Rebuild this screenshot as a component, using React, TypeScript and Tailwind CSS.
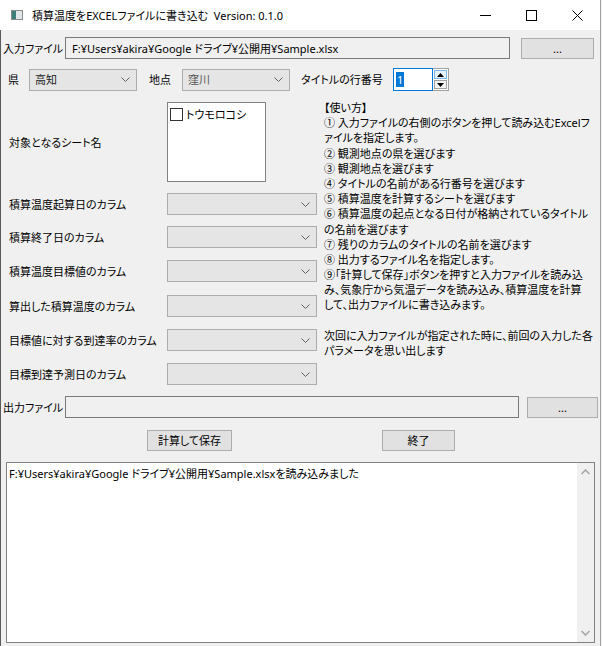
import React from 'react';

const Chevron = () => (
  <svg width="9" height="5" viewBox="0 0 9 5" className="shrink-0">
    <polyline points="0.5,0.5 4.5,4.5 8.5,0.5" fill="none" stroke="#606060" strokeWidth="1" />
  </svg>
);

function Combo({ text, w, dim }: { text?: string; w: string; dim?: boolean }) {
  return (
    <div className={`flex h-[22px] shrink-0 items-center justify-between border border-[#adadad] bg-[#e5e5e5] pl-[5px] pr-[6px] ${w}`}>
      <span className={dim ? 'text-[#555555]' : 'text-[#1a1a1a]'}>{text ?? ''}</span>
      <Chevron />
    </div>
  );
}

function Btn({ children, w, h }: { children: React.ReactNode; w: string; h: string }) {
  return (
    <div className={`flex shrink-0 items-center justify-center border border-[#adadad] bg-[#e1e1e1] ${w} ${h}`}>{children}</div>
  );
}

const helpLines = [
  '【使い方】',
  '① 入力ファイルの右側のボタンを押して読み込むExcelフ',
  'ァイルを指定します。',
  '② 観測地点の県を選びます',
  '③ 観測地点を選びます',
  '④ タイトルの名前がある行番号を選びます',
  '⑤ 積算温度を計算するシートを選びます',
  '⑥ 積算温度の起点となる日付が格納されているタイトル',
  'の名前を選びます',
  '⑦ 残りのカラムのタイトルの名前を選びます',
  '⑧ 出力するファイル名を指定します。',
  '⑨「計算して保存」ボタンを押すと入力ファイルを読み込',
  'み、気象庁から気温データを読み込み、積算温度を計算',
  'して、出力ファイルに書き込みます。',
  '\u00a0',
  '次回に入力ファイルが指定された時に、前回の入力した各',
  'パラメータを思い出します',
];

function ComboRow({ label, mt }: { label: string; mt: string }) {
  return (
    <div className={`flex h-[22px] items-center ${mt}`}>
      <span className="w-[166px] shrink-0 whitespace-nowrap pl-[8px]">{label}</span>
      <Combo w="w-[150px]" />
    </div>
  );
}

export default function App() {
  return (
    <div className="flex h-[646px] w-[602px] overflow-hidden bg-[#f0f0f0] text-[11px] leading-[15px] text-black [font-family:'Noto_Sans','Noto_Sans_CJK_JP',sans-serif] [font-feature-settings:'palt']">
      <div className="flex w-[601px] shrink-0 flex-col border-r border-[#a0a0a0]">
        {/* title bar */}
        <div className="flex h-[30px] shrink-0 items-center bg-white">
          <div className="ml-[11px] flex h-[10px] w-[12px] border border-[#8a8a8a]">
            <div className="w-[4px] bg-[#3d7f7a]" />
            <div className="flex-1 bg-[#dfe6ea]" />
          </div>
          <span className="ml-[9px] whitespace-nowrap text-[11px]">
            積算温度をEXCELファイルに書き込む&nbsp;&nbsp;Version: 0.1.0
          </span>
          <div className="ml-auto flex h-full">
            <div className="flex w-[46px] items-center justify-center">
              <svg width="11" height="11" viewBox="0 0 11 11"><line x1="0" y1="5.5" x2="11" y2="5.5" stroke="#000" strokeWidth="1" /></svg>
            </div>
            <div className="flex w-[46px] items-center justify-center">
              <svg width="11" height="11" viewBox="0 0 11 11"><rect x="0.5" y="0.5" width="10" height="10" fill="none" stroke="#000" strokeWidth="1" /></svg>
            </div>
            <div className="flex w-[46px] items-center justify-center">
              <svg width="11" height="11" viewBox="0 0 11 11"><path d="M0.5 0.5 L10.5 10.5 M10.5 0.5 L0.5 10.5" stroke="#000" strokeWidth="1" /></svg>
            </div>
          </div>
        </div>

        {/* body */}
        <div className="flex flex-1 flex-col border-l border-[#5a5a5a]">
          {/* input file row */}
          <div className="mt-[7px] flex h-[22px] items-center">
            <span className="w-[64px] shrink-0 whitespace-nowrap pl-[2px]">入力ファイル</span>
            <div className="flex h-[22px] w-[445px] shrink-0 items-center border border-[#7a7a7a] bg-[#f0f0f0] pl-[6px] whitespace-nowrap">
              F:¥Users¥akira¥Google ドライブ¥公開用¥Sample.xlsx
            </div>
            <div className="ml-[11px]">
              <Btn w="w-[73px]" h="h-[21px]">...</Btn>
            </div>
          </div>

          {/* prefecture row */}
          <div className="mt-[9px] flex h-[23px] items-center">
            <span className="w-[28px] shrink-0 pl-[7px]">県</span>
            <Combo text="高知" w="w-[108px]" />
            <span className="ml-[12px] w-[33px] shrink-0">地点</span>
            <Combo text="窪川" w="w-[108px]" dim />
            <span className="ml-[11px] w-[92px] shrink-0 whitespace-nowrap">タイトルの行番号</span>
            <div className="flex h-[23px] w-[56px] shrink-0">
              <div className="flex w-[40px] items-center border border-[#0078d7] bg-white pl-[2px]">
                <span className="flex h-[15px] items-center bg-[#0078d7] px-[1px] text-white">1</span>
              </div>
              <div className="flex w-[16px] flex-col border-y border-r border-[#a0a0a0] bg-white p-[1px]">
                <div className="flex h-[10px] items-center justify-center border border-[#7eb4ea] bg-[#e5f1fb]">
                  <svg width="7" height="4" viewBox="0 0 7 4"><polygon points="0,4 3.5,0 7,4" fill="#000" /></svg>
                </div>
                <div className="mt-[1px] flex h-[9px] items-center justify-center border border-[#a0a0a0] bg-[#f3f3f3]">
                  <svg width="7" height="4" viewBox="0 0 7 4"><polygon points="0,0 3.5,4 7,0" fill="#000" /></svg>
                </div>
              </div>
            </div>
          </div>

          {/* middle section */}
          <div className="mt-[11px] flex">
            <div className="flex w-[316px] shrink-0 flex-col">
              <div className="flex h-[80px] items-center">
                <span className="w-[166px] shrink-0 whitespace-nowrap pl-[8px]">対象となるシート名</span>
                <div className="h-[80px] w-[99px] shrink-0 border border-[#828282] bg-white pl-[2px] pt-[4px]">
                  <div className="flex items-center">
                    <div className="h-[13px] w-[13px] border border-[#333333] bg-white" />
                    <span className="ml-[3px]">トウモロコシ</span>
                  </div>
                </div>
              </div>
              <ComboRow label="積算温度起算日のカラム" mt="mt-[11px]" />
              <ComboRow label="積算終了日のカラム" mt="mt-[11px]" />
              <ComboRow label="積算温度目標値のカラム" mt="mt-[12px]" />
              <ComboRow label="算出した積算温度のカラム" mt="mt-[13px]" />
              <ComboRow label="目標値に対する到達率のカラム" mt="mt-[12px]" />
              <ComboRow label="目標到達予測日のカラム" mt="mt-[12px]" />
            </div>
            <div className="ml-[7px] -mt-[2px] flex flex-col">
              {helpLines.map((l, i) => (
                <div key={i} className="h-[15.2px] whitespace-nowrap">{l}</div>
              ))}
            </div>
          </div>

          {/* output file row */}
          <div className="mt-[11px] flex h-[22px] items-center">
            <span className="w-[64px] shrink-0 whitespace-nowrap pl-[2px]">出力ファイル</span>
            <div className="h-[22px] w-[454px] shrink-0 border border-[#7a7a7a] bg-[#f0f0f0]" />
            <div className="ml-[8px]">
              <Btn w="w-[71px]" h="h-[21px]">...</Btn>
            </div>
          </div>

          {/* action buttons */}
          <div className="mt-[12px] flex h-[21px] items-center">
            <div className="ml-[146px]">
              <Btn w="w-[85px]" h="h-[21px]">計算して保存</Btn>
            </div>
            <div className="ml-[150px]">
              <Btn w="w-[73px]" h="h-[21px]">終了</Btn>
            </div>
          </div>

          {/* log */}
          <div className="ml-[5px] mt-[11px] flex h-[181px] w-[589px] border border-[#828282] bg-white">
            <div className="flex-1 pl-[2px] pt-[3px] whitespace-nowrap">
              F:¥Users¥akira¥Google ドライブ¥公開用¥Sample.xlsxを読み込みました
            </div>
            <div className="flex w-[17px] flex-col items-center justify-between bg-[#f0f0f0] py-[6px]">
              <svg width="9" height="6" viewBox="0 0 9 6"><polyline points="0.5,5 4.5,1 8.5,5" fill="none" stroke="#a3a3a3" strokeWidth="1.5" /></svg>
              <svg width="9" height="6" viewBox="0 0 9 6"><polyline points="0.5,1 4.5,5 8.5,1" fill="none" stroke="#a3a3a3" strokeWidth="1.5" /></svg>
            </div>
          </div>
        </div>
      </div>
    </div>
  );
}
